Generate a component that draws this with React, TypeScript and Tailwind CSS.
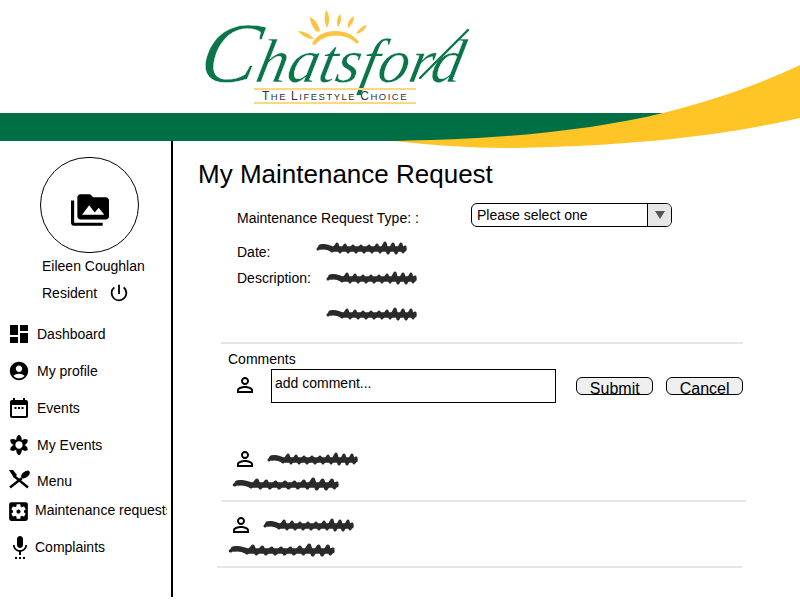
import {
  MdAccountCircle,
  MdDashboard,
  MdFilterVintage,
  MdPermIdentity,
  MdPermMedia,
  MdPowerSettingsNew,
  MdSettingsApplications,
  MdSettingsVoice,
} from "react-icons/md";

function CalendarIcon() {
  return (
    <svg viewBox="0 0 24 24" className="w-6 h-6 shrink-0" fill="black">
      <path d="M19 4h-1V2h-2v2H8V2H6v2H5c-1.1 0-2 .9-2 2v14c0 1.1.9 2 2 2h14c1.1 0 2-.9 2-2V6c0-1.1-.9-2-2-2zm0 16H5V9h14v11z" />
      <rect x="7.5" y="11" width="2" height="2" />
      <rect x="11" y="11" width="2" height="2" />
      <rect x="14.5" y="11" width="2" height="2" />
    </svg>
  );
}

function CutleryIcon() {
  return (
    <svg viewBox="0 0 24 20" className="w-6 h-5 shrink-0 mt-[-3px]" fill="black">
      <path d="M3 18.5 L15 9" stroke="black" strokeWidth="2.4" />
      <ellipse cx="18.5" cy="5.5" rx="3" ry="5" transform="rotate(52 18.5 5.5)" />
      <path d="M21 18.5 L7 7" stroke="black" strokeWidth="2.4" />
      <path d="M2 1 L6 1 L10 6 L7 9 Z" />
    </svg>
  );
}

function Scribble({ w = 92 }: { w?: number }) {
  return (
    <svg
      viewBox="0 0 92 16"
      width={w}
      height={16}
      preserveAspectRatio="none"
      className="shrink-0 blur-[0.4px]"
      fill="none"
    >
      <path
        d="M3 9 C6 5 10 5 14 8 L17 11 L22 4 L25 12 L30 5 L33 12 L38 6 L41 12 L46 6 L49 12 L54 6 L57 12 L62 5 L65 12 L70 3 L73 13 L78 4 L81 13 L86 4 L88 12 L90 7"
        stroke="#2a2a2a"
        strokeWidth="3"
        strokeLinecap="round"
        strokeLinejoin="round"
      />
      <path d="M6 7 C10 6 13 7 17 9 L89 9" stroke="#2a2a2a" strokeWidth="5.5" strokeLinecap="round" />
    </svg>
  );
}

function Logo() {
  return (
    <div className="w-[272px] h-[106px]">
      <svg viewBox="0 0 272 106" className="w-full h-full">
        <g fill="#fcc341">
          <path d="M112 13 C118 16 121 22 122 27 L119 28 C115 24 112 19 112 13 Z" />
          <path d="M128 6 C132 11 132 18 129 24 C126 18 126 11 128 6 Z" />
          <path d="M142 10 C144 14 143 19 140 23 C138 18 139 14 142 10 Z" />
          <path d="M156 12 C156 17 154 21 150 24 C149 20 151 15 156 12 Z" />
          <path d="M169 21 C167 26 163 29 158 30 C160 26 164 22 169 21 Z" />
          <path d="M100 27 C106 27 112 30 116 35 C110 35 104 32 100 27 Z" />
          <path d="M114 40 C120 24 150 22 161 38 L159 40 C148 28 126 29 117 41 Z" />
        </g>
        <text
          x="14"
          y="78"
          transform="skewX(-12) translate(1 0)"
          fontFamily="'Liberation Serif', serif"
          fontStyle="italic"
          fill="#0a7548"
          stroke="#ffffff"
          strokeWidth="0.4"
        >
          <tspan fontSize="86">C</tspan>
          <tspan fontSize="62" letterSpacing="0.2">hatsford</tspan>
        </text>
        <g fill="none" stroke="#0a7548" strokeLinecap="round">
          <path d="M222 74 L270 26" strokeWidth="2.4" />
        </g>
        <rect x="56" y="84" width="162" height="2" fill="#fdd87f" />
        <rect x="56" y="98" width="162" height="2" fill="#fdd87f" />
        <text
          x="137"
          y="96"
          textAnchor="middle"
          fontFamily="'Liberation Sans', sans-serif"
          fontSize="9.5"
          letterSpacing="1.5"
          fill="#333"
        >
          <tspan fontSize="12">T</tspan>HE <tspan fontSize="12">L</tspan>IFESTYLE <tspan fontSize="12">C</tspan>HOICE
        </text>
      </svg>
    </div>
  );
}

function Banner() {
  return (
    <svg
      viewBox="0 0 800 150"
      width={800}
      height={150}
      className="absolute left-0 top-0 pointer-events-none"
    >
      <path d="M0 113 H665 L600 129 Q500 141 395 141 H0 Z" fill="#006f46" />
      <path
        d="M395 141 C490 140 590 131 663 113 C715 100 760 84 800 65 V118 C730 134 640 146 513 148 C470 148 430 145 395 141 Z"
        fill="#ffc425"
      />
    </svg>
  );
}

const nav = [
  { label: "Dashboard", icon: <MdDashboard className="w-6 h-6 shrink-0" />, row: "gap-1.5" },
  { label: "My profile", icon: <MdAccountCircle className="w-[22px] h-[22px] mx-px shrink-0" />, row: "gap-1.5" },
  { label: "Events", icon: <CalendarIcon />, row: "gap-1.5" },
  { label: "My Events", icon: <MdFilterVintage className="w-[22px] h-[22px] mx-px shrink-0" />, row: "gap-1.5" },
  { label: "Menu", icon: <CutleryIcon />, row: "gap-1.5 mt-[-1px]" },
  {
    label: "Maintenance requests",
    icon: <MdSettingsApplications className="w-[25px] h-[25px] ml-[-1px] mt-[3px] shrink-0" />,
    row: "gap-1 mt-[-8px]",
  },
  { label: "Complaints", icon: <MdSettingsVoice className="w-6 h-6 ml-px shrink-0" />, row: "gap-[3px]" },
];

function Sidebar() {
  return (
    <aside className="w-[173px] h-[456px] border-r-2 border-black shrink-0 pt-[16px]">
      <div className="ml-10 w-[99px] h-[96px] rounded-full border border-black flex items-center justify-center">
        <MdPermMedia className="w-[38px] h-[38px] mt-[10px]" />
      </div>
      <p className="ml-[42px] mt-[1px] h-6 leading-6">Eileen Coughlan</p>
      <div className="ml-[42px] mt-[3px] h-6 flex items-center gap-[11px]">
        <span>Resident</span>
        <MdPowerSettingsNew className="w-[22px] h-[22px]" />
      </div>
      <nav className="mt-[10px]">
        {nav.map((item) => (
          <div key={item.label} className={`${item.row} h-[37px] flex items-center pl-[7px] w-[167px] overflow-hidden whitespace-nowrap`}>
            {item.icon}
            <span>{item.label}</span>
          </div>
        ))}
      </nav>
    </aside>
  );
}

function Comment({ offset }: { offset: string }) {
  return (
    <div className={`${offset} w-[525px] h-[66px] pt-[7px] border-b-2 border-[#e5e5e5]`}>
      <div className="flex items-center pl-[12px] gap-[9px] h-[32px]">
        <MdPermIdentity className="w-6 h-6 shrink-0" />
        <Scribble />
      </div>
      <div className="pl-[10px] mt-[1px]">
        <Scribble w={108} />
      </div>
    </div>
  );
}

function Main() {
  return (
    <main className="flex-1 pl-[25px] pt-[16px]">
      <h1 className="text-[26px] leading-[34px]">My Maintenance Request</h1>
      <div className="ml-[39px] mt-[12px] h-[24px] flex items-start">
        <span className="w-[234px] pt-[5px]">Maintenance Request Type: :</span>
        <div className="w-[201px] h-[24px] border border-black rounded-md flex overflow-hidden">
          <span className="flex-1 pl-[5px] leading-[22px]">Please select one</span>
          <span className="w-[24px] border-l border-black bg-[#e6e6e6] flex items-center justify-center">
            <span className="w-0 h-0 border-x-[5px] border-x-transparent border-t-[8px] border-t-[#555]" />
          </span>
        </div>
      </div>
      <div className="ml-[39px] mt-[8px] flex items-center h-[26px]">
        <span className="w-[78px] pt-[8px]">Date:</span>
        <Scribble />
      </div>
      <div className="ml-[39px] mt-[4px] flex items-center h-[26px]">
        <span className="w-[88px]">Description:</span>
        <Scribble />
      </div>
      <div className="ml-[127px] mt-[15px]">
        <Scribble />
      </div>
      <div className="ml-[23px] mt-[20px] w-[522px] border-t-2 border-[#e5e5e5] pl-[7px] pt-[7px]">
        <p className="leading-[17px]">Comments</p>
        <div className="flex mt-[1px]">
          <MdPermIdentity className="w-6 h-6 shrink-0 ml-[5px] mt-[4px]" />
          <div className="ml-[14px] w-[286px] h-[34px] border border-black px-[3px] leading-[26px]">add comment...</div>
          <button className="ml-[20px] mt-[8px] w-[77px] h-[18px] border border-black rounded-md bg-[#efefef] text-[16px] leading-[21px] overflow-hidden">Submit</button>
          <button className="ml-[13px] mt-[8px] w-[77px] h-[18px] border border-black rounded-md bg-[#efefef] text-[16px] leading-[21px] overflow-hidden">Cancel</button>
        </div>
      </div>
      <div className="mt-[33px]">
        <Comment offset="ml-[23px]" />
        <Comment offset="ml-[19px]" />
      </div>
    </main>
  );
}

export default function App() {
  return (
    <div className="relative w-[800px] h-[600px] overflow-hidden bg-white text-black text-sm font-['Liberation_Sans',sans-serif]">
      <header className="h-[141px] pl-[198px] pt-[4px]">
        <Logo />
      </header>
      <Banner />
      <div className="flex">
        <Sidebar />
        <Main />
      </div>
    </div>
  );
}
